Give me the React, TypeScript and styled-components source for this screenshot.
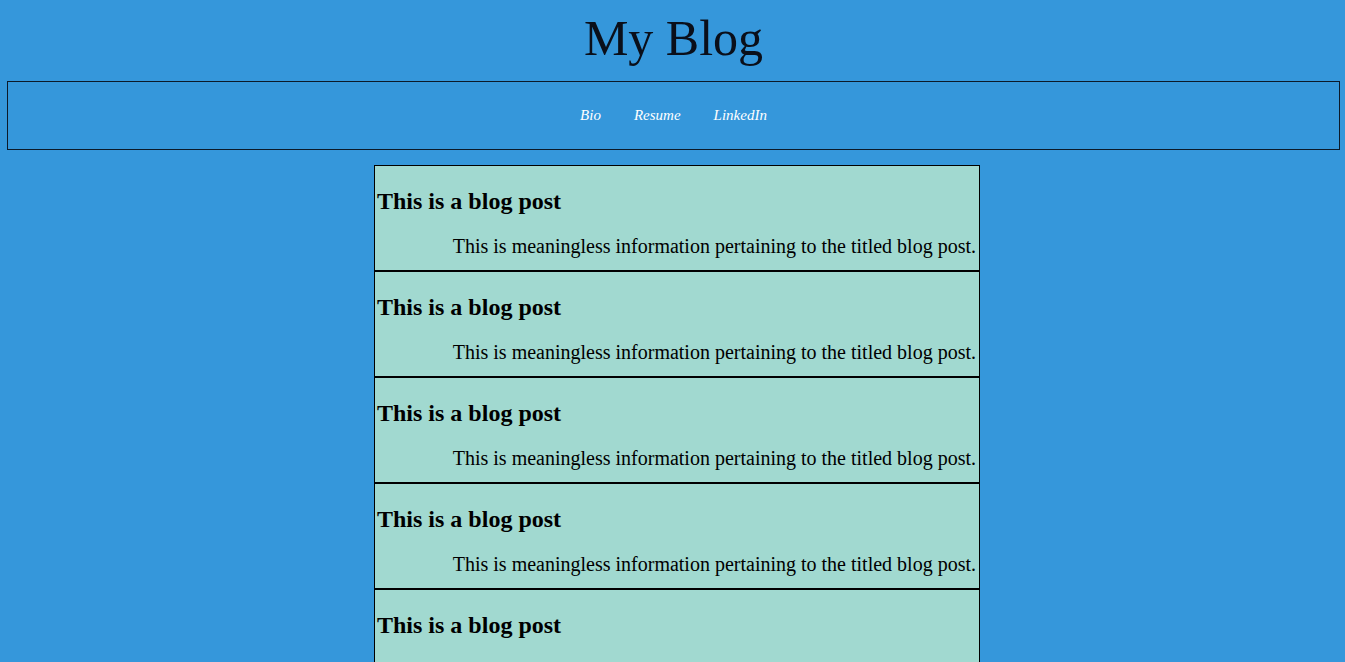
import React from "react";
import styled, { createGlobalStyle } from "styled-components";

const Global = createGlobalStyle`
  html, body { margin: 0; padding: 0; }
  body {
    background: #3597db;
    font-family: "Liberation Serif", "Times New Roman", serif;
    color: #000;
  }
`;

const Page = styled.div`
  padding: 0 5px 0 7px;
`;

const Title = styled.h1`
  margin: 0;
  padding-top: 9px;
  height: 81px;
  box-sizing: border-box;
  text-align: center;
  font-weight: normal;
  font-size: 50px;
  line-height: 58px;
  color: #0a0f1a;
`;

const Nav = styled.nav`
  border: 1px solid #0b1a2a;
  height: 67px;
  display: flex;
  align-items: center;
  justify-content: center;
  gap: 33px;
`;

const NavLink = styled.a`
  font-style: italic;
  font-size: 15px;
  color: #ffffff;
  text-decoration: none;
`;

const Posts = styled.main`
  margin: 15px 0 0 367px;
  width: 606px;
  display: flex;
  flex-direction: column;
`;

const Post = styled.article`
  background: #a1d9d0;
  border: 1px solid #000;
  height: 104px;
  box-sizing: content-box;
  padding: 0 3px 0 2px;
  display: flex;
  flex-direction: column;
  overflow: hidden;
`;

const PostTitle = styled.h2`
  margin: 20px 0 0;
  font-size: 24px;
  line-height: 30px;
  font-weight: bold;
`;

const PostBody = styled.p`
  margin: 19px 0 0;
  font-size: 20px;
  line-height: 23px;
  text-align: right;
`;

export default function App() {
  const posts = [1, 2, 3, 4, 5];
  return (
    <Page>
      <Global />
      <Title>My Blog</Title>
      <Nav>
        <NavLink href="#">Bio</NavLink>
        <NavLink href="#">Resume</NavLink>
        <NavLink href="#">LinkedIn</NavLink>
      </Nav>
      <Posts>
        {posts.map((p) => (
          <Post key={p}>
            <PostTitle>This is a blog post</PostTitle>
            <PostBody>
              This is meaningless information pertaining to the titled blog post.
            </PostBody>
          </Post>
        ))}
      </Posts>
    </Page>
  );
}
